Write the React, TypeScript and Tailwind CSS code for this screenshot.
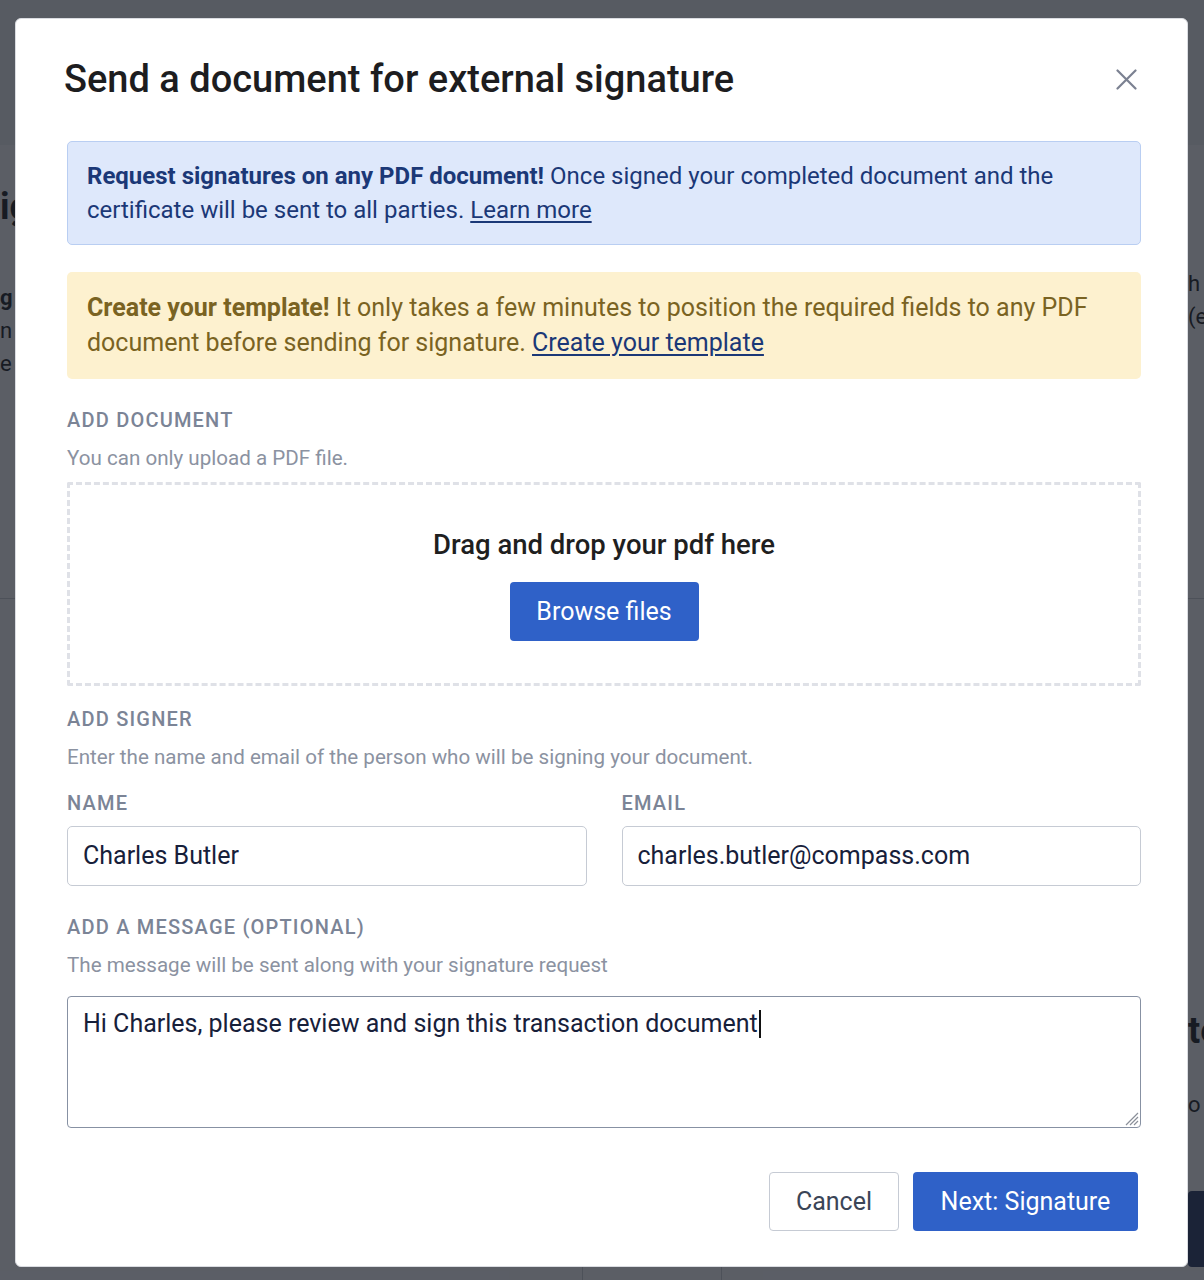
import React from "react";

function CloseIcon() {
  return (
    <svg width="21" height="21" viewBox="0 0 21 21" fill="none">
      <path d="M1.5 1.5 L19.5 19.5 M19.5 1.5 L1.5 19.5" stroke="#7b8191" strokeWidth="2.2" strokeLinecap="round" />
    </svg>
  );
}

function Grip() {
  return (
    <svg width="16" height="16" viewBox="0 0 16 16" fill="none">
      <path d="M15 3 L3 15 M15 7 L7 15 M15 11 L11 15" stroke="#8a8f99" strokeWidth="1.2" />
    </svg>
  );
}

function BackgroundPage() {
  return (
    <div className="flex h-[1280px] w-full flex-col bg-white text-[#1c1e24]">
      <div className="h-[145px] w-full bg-[#f2f3f5]" />
      <div className="flex h-[455px] w-full justify-between border-b border-[#cfd2d8]">
        <div className="flex w-[40px] flex-col pt-[40px]">
          <div className="whitespace-nowrap text-[36px] font-bold leading-[44px]">ig</div>
          <div className="mt-[52px] whitespace-nowrap text-[22px] font-bold leading-[33px]">g</div>
          <div className="whitespace-nowrap text-[22px] leading-[33px]">n</div>
          <div className="whitespace-nowrap text-[22px] leading-[33px]">e</div>
        </div>
        <div className="flex w-[16px] flex-col overflow-hidden pt-[122px]">
          <div className="whitespace-nowrap text-[22px] leading-[33px]">h</div>
          <div className="whitespace-nowrap text-[22px] leading-[33px]">(e</div>
        </div>
      </div>
      <div className="flex w-full flex-1 justify-end">
        <div className="flex w-[16px] flex-col overflow-hidden pt-[410px]">
          <div className="whitespace-nowrap text-[36px] font-bold leading-[44px]">te</div>
          <div className="mt-[35px] whitespace-nowrap text-[22px] leading-[33px]">o</div>
          <div className="mt-[70px] h-[76px] w-[16px] rounded-l-[4px] bg-[#2a3b66]" />
        </div>
      </div>
      <div className="flex h-[13px] w-full">
        <div className="w-[583px] border-r border-[#cfd2d8]" />
        <div className="w-[139px] border-r border-[#cfd2d8]" />
      </div>
    </div>
  );
}

function SectionLabel({ children, className = "" }: { children: React.ReactNode; className?: string }) {
  return (
    <div className={"text-[20px] font-medium uppercase leading-[24px] tracking-[0.06em] text-[#7b8496] " + className}>
      {children}
    </div>
  );
}

function Desc({ children, className = "" }: { children: React.ReactNode; className?: string }) {
  return <div className={"text-[20.6px] leading-[24px] text-[#8b92a1] " + className}>{children}</div>;
}

function Modal() {
  return (
    <div className="h-[1249px] w-[1173px] rounded-[6px] border border-[#dadce1] bg-white pl-[51px] pr-[46px] pt-[38px]">
      <div className="flex h-[44px] items-center justify-between">
        <h2 className="ml-[-3px] text-[38px] font-medium leading-[44px] text-[#1d1d1f]">
          Send a document for external signature
        </h2>
        <button className="mr-[4px] flex h-[21px] w-[21px] items-center justify-center">
          <CloseIcon />
        </button>
      </div>

      <div className="mt-[40px] rounded-[5px] border border-[#b9cef2] bg-[#dee8fb] px-[19px] py-[17px] text-[24px] leading-[34px] text-[#1b3877]">
        <span className="font-bold">Request signatures on any PDF document!</span> Once signed your completed
        document and the
        <br />
        certificate will be sent to all parties.{" "}
        <a className="underline underline-offset-[3px]">Learn more</a>
      </div>

      <div className="mt-[27px] rounded-[5px] bg-[#fdf1cf] px-[20px] pb-[19px] pt-[18px] text-[25px] leading-[35px] text-[#7a6322]">
        <span className="font-bold">Create your template!</span> It only takes a few minutes to position the
        required fields to any PDF
        <br />
        document before sending for signature.{" "}
        <a className="text-[#1b3877] underline underline-offset-[3px]">Create your template</a>
      </div>

      <SectionLabel className="mt-[29px]">Add document</SectionLabel>
      <Desc className="mt-[14px]">You can only upload a PDF file.</Desc>

      <div className="mt-[12px] flex h-[204px] flex-col items-center rounded-[2px] border-[3px] border-dashed border-[#dfe1e7] pt-[44px]">
        <div className="text-[27.5px] font-medium leading-[32px] text-[#1f1f1f]">Drag and drop your pdf here</div>
        <button className="mt-[21px] flex h-[59px] w-[189px] items-center justify-center rounded-[4px] bg-[#2f61c8] text-[25px] text-white">
          Browse files
        </button>
      </div>

      <SectionLabel className="mt-[21px]">Add signer</SectionLabel>
      <Desc className="mt-[14px]">Enter the name and email of the person who will be signing your document.</Desc>

      <div className="mt-[22px] grid grid-cols-2 gap-x-[35px]">
        <div>
          <SectionLabel>Name</SectionLabel>
          <div className="mt-[11px] flex h-[60px] items-center rounded-[5px] border border-[#c6cbd4] px-[15px] text-[25px] text-[#17203a]">
            Charles Butler
          </div>
        </div>
        <div>
          <SectionLabel>Email</SectionLabel>
          <div className="mt-[11px] flex h-[60px] items-center rounded-[5px] border border-[#c6cbd4] px-[15px] text-[25px] text-[#17203a]">
            charles.butler@compass.com
          </div>
        </div>
      </div>

      <SectionLabel className="mt-[29px]">Add a message (optional)</SectionLabel>
      <Desc className="mt-[14px]">The message will be sent along with your signature request</Desc>

      <div className="relative mt-[19px] h-[132px] rounded-[4px] border border-[#8791a3] px-[15px] pt-[12px] text-[25px] leading-[30px] text-[#17203a]">
        Hi Charles, please review and sign this transaction document
        <span className="ml-[1px] inline-block h-[28px] w-[2px] bg-[#111] align-[-6px]" />
        <div className="absolute bottom-[1px] right-[1px]">
          <Grip />
        </div>
      </div>

      <div className="mr-[3px] mt-[44px] flex justify-end gap-[14px]">
        <button className="flex h-[59px] w-[130px] items-center justify-center rounded-[4px] border border-[#c6cbd4] bg-white text-[25px] text-[#3b4557]">
          Cancel
        </button>
        <button className="flex h-[59px] w-[225px] items-center justify-center rounded-[4px] bg-[#2f61c8] text-[25px] text-white">
          Next: Signature
        </button>
      </div>
    </div>
  );
}

export default function App() {
  return (
    <div className="relative h-[1280px] w-full overflow-hidden bg-white font-['Roboto',sans-serif]">
      <BackgroundPage />
      <div className="absolute inset-0 bg-[#151924]/70 pl-[15px] pt-[18px]">
        <Modal />
      </div>
    </div>
  );
}
